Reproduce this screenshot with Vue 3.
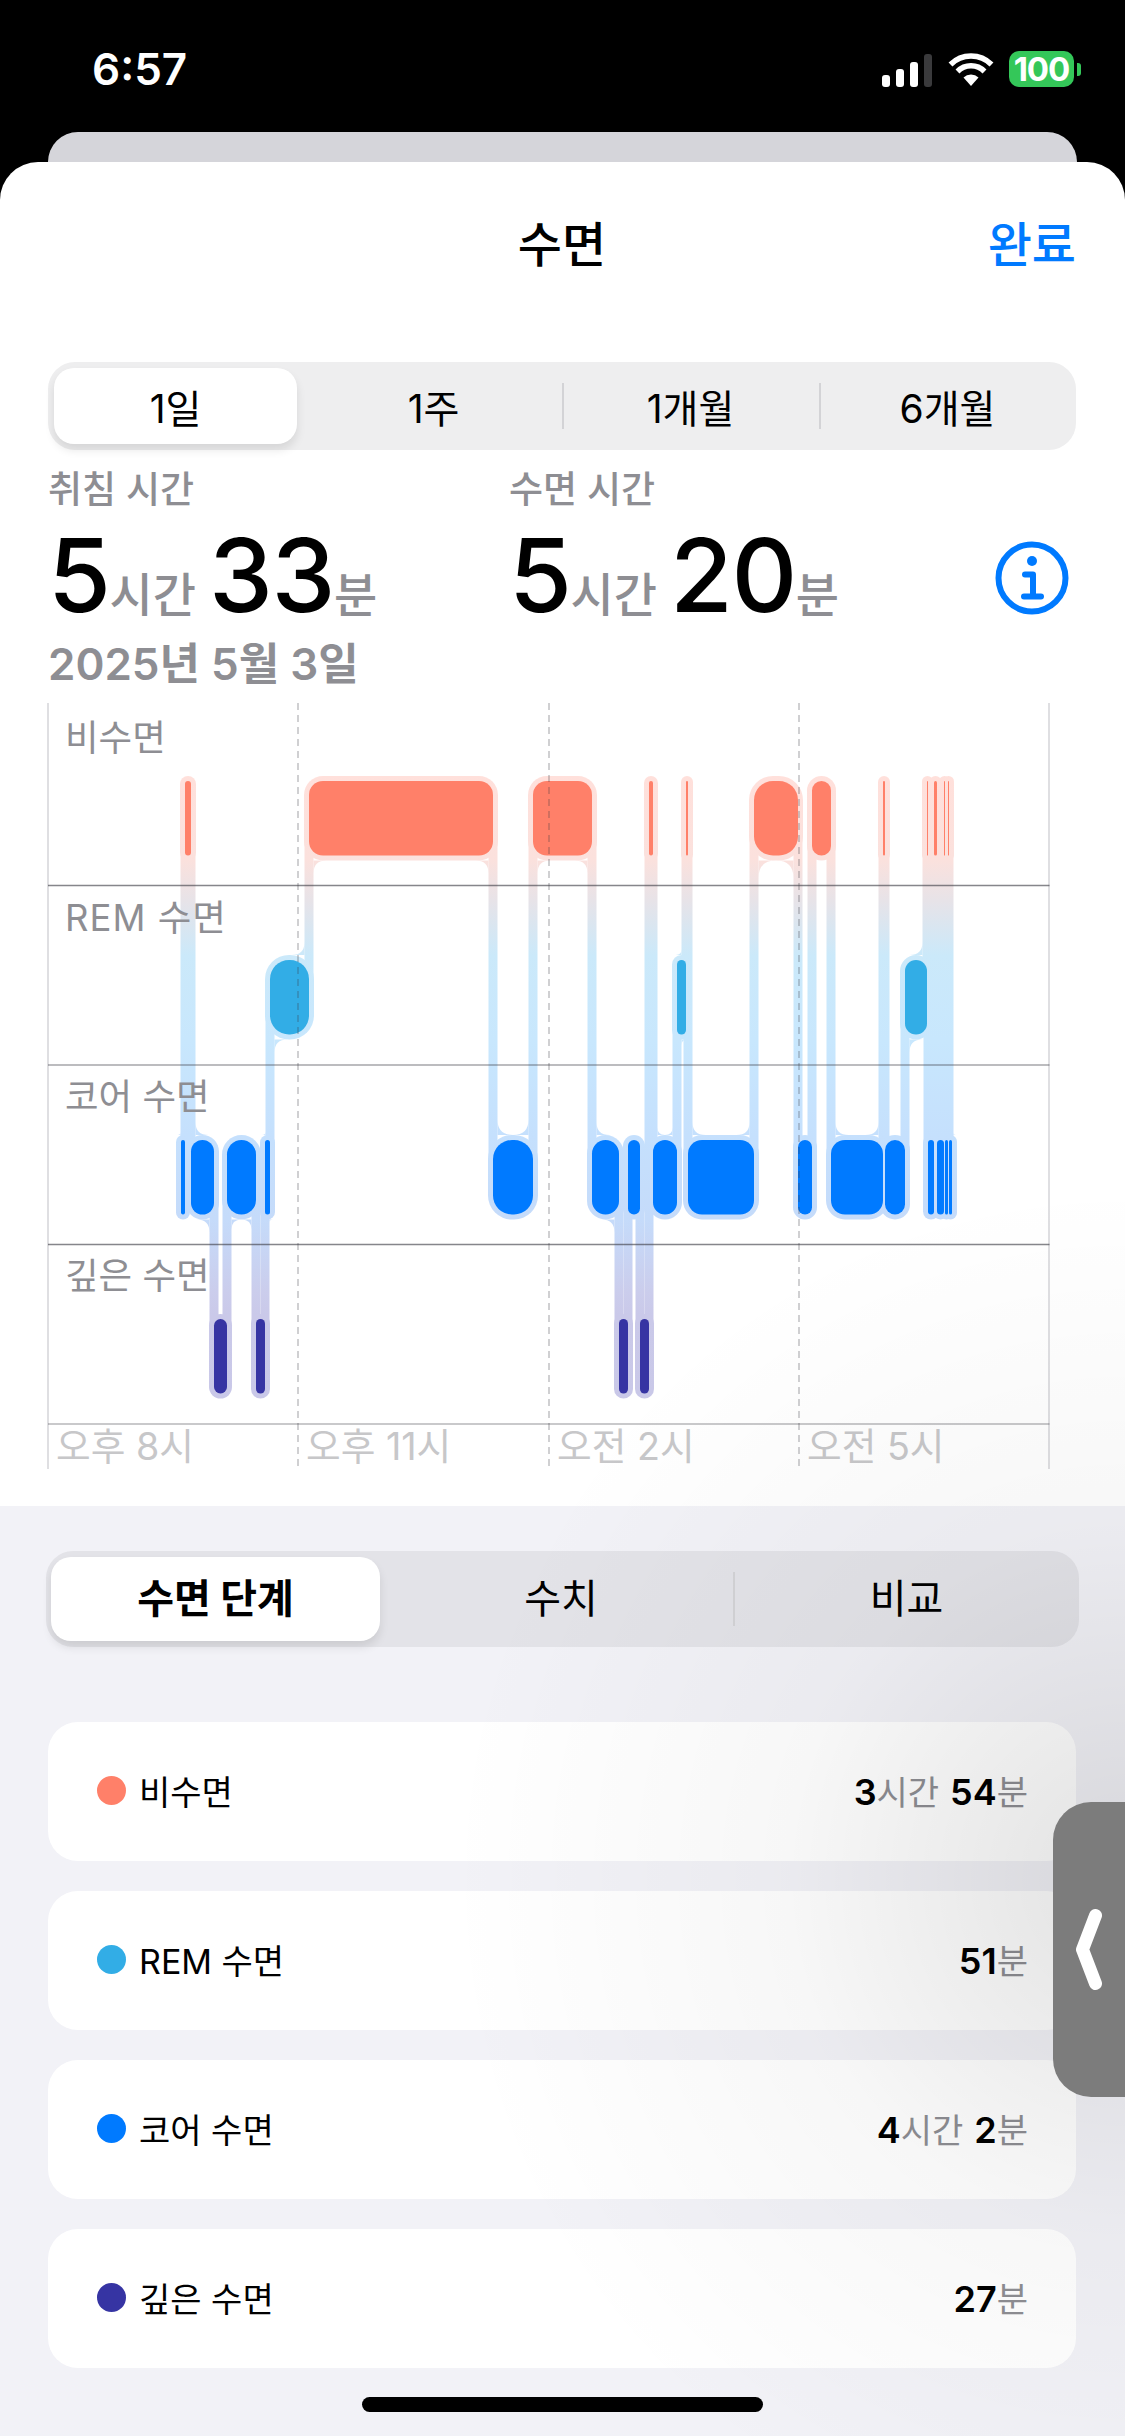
<script setup>
const LV = { a: 781, r: 960, c: 1140, d: 1319 }
const COL = { a: '#ff8069', r: '#32ade6', c: '#007aff', d: '#3634a3' }
const BAR_H = 74.5
const raw = [
  ['c',181,185],['a',185,191],['c',191,214],['d',214,227],['c',227,256],['d',256,265],['c',265,270],
  ['r',270,309],['a',309,493],['c',493,533],['a',533,592],['c',592,619],['d',619,628],['c',628,640],
  ['d',640,649],['a',649,653],['c',653,677],['r',677,686],['a',686,688],['c',688,754],['a',754,798],
  ['c',798,812],['a',812,831],['c',831,883],['a',883,885],['c',885,905],['r',905,927],['a',927,928],
  ['c',928,934],['a',934,937],['c',937,944],['a',944,945],['c',945,948],['a',948,949],['c',949,952],
]
const segs = raw.map(([l, x0, x1]) => {
  const w = x1 - x0
  const r = w <= 46 ? Math.min(w / 2, 19) : 14
  return { l, x0, x1, w, r, y: LV[l], color: COL[l] }
})
const conns = []
const fillets = []
segs.forEach((s, i) => {
  const next = segs[i + 1]
  const prev = segs[i - 1]
  if (next) {
    const y0 = Math.min(s.y, next.y) + 37
    const y1 = Math.max(s.y, next.y) + 37
    conns.push({ x: s.x1 - 4.5, y: y0, h: y1 - y0 })
  }
  const dirOf = (n) => (n ? (n.y < s.y ? -1 : 1) : 0)
  const dp = dirOf(prev)
  const dn = dirOf(next)
  const add = (sign, x, dir, other) => {
    const xE = x + sign * 4.5
    const yE = dir < 0 ? s.y - 5 : s.y + BAR_H + 5
    let r
    if (other === dir) {
      const gap = s.w - 9
      r = gap < 12 ? 0 : gap <= 40 ? gap / 2 : 13
    } else {
      const avail = s.w + 0.5
      r = avail > 20 ? 13 : avail * 0.6
    }
    if (r > 0) {
      fillets.push(`M${xE} ${yE}L${xE + sign * r} ${yE}Q${xE} ${yE} ${xE} ${yE + dir * r}Z`)
    }
  }
  if (prev) add(1, s.x0, dp, dn)
  if (next) add(-1, s.x1, dn, dp)
})
const filletPath = fillets.join('')

const dashes = [298, 549, 799]
const solids = [48, 1049]
const hLines = [
  { y: 885.5, c: 'rgba(60,60,67,.62)', w: 1.5 },
  { y: 1065, c: 'rgba(60,60,67,.34)', w: 2 },
  { y: 1244.5, c: 'rgba(60,60,67,.62)', w: 1.5 },
  { y: 1424, c: 'rgba(60,60,67,.28)', w: 2 },
]
const rowLabels = [
  { t: '비수면', y: 751 },
  { t: 'REM 수면', y: 931, wide: true },
  { t: '코어 수면', y: 1110 },
  { t: '깊은 수면', y: 1289 },
]
const timeLabels = [
  { t: '오후 8시', x: 56 },
  { t: '오후 11시', x: 306 },
  { t: '오전 2시', x: 557 },
  { t: '오전 5시', x: 807 },
]
const rangeTabs = ['1일', '1주', '1개월', '6개월']
const viewTabs = ['수면 단계', '수치', '비교']
const rows = [
  { name: '비수면', color: '#ff8069', parts: [['3', '시간'], ['54', '분']] },
  { name: 'REM 수면', color: '#32ade6', parts: [['51', '분']] },
  { name: '코어 수면', color: '#007aff', parts: [['4', '시간'], ['2', '분']] },
  { name: '깊은 수면', color: '#3634a3', parts: [['27', '분']] },
]
</script>

<template>
  <div class="phone">
    <header class="status">
      <span class="clock">6:57</span>
      <div class="status-icons">
        <svg class="signal" width="50" height="33" viewBox="0 0 50 33">
          <rect x="0" y="21" width="8" height="12" rx="3" fill="#fff" />
          <rect x="14" y="15" width="8" height="18" rx="3" fill="#fff" />
          <rect x="28" y="8" width="8" height="25" rx="3" fill="#fff" />
          <rect x="42" y="0" width="8" height="33" rx="3" fill="#3a3a3c" />
        </svg>
        <svg class="wifi" width="46" height="34" viewBox="0 0 46 34">
          <path d="M2.5 12.5A29 29 0 0 1 43.5 12.5" fill="none" stroke="#fff" stroke-width="5.5" />
          <path d="M9.5 19.5A19 19 0 0 1 36.5 19.5" fill="none" stroke="#fff" stroke-width="5.5" />
          <path d="M23 34L15.5 25.5A11 11 0 0 1 30.5 25.5Z" fill="#fff" />
        </svg>
        <div class="battery"><span class="battery-level">100</span></div>
        <i class="battery-nub"></i>
      </div>
    </header>

    <div class="back-sheet"></div>

    <main class="sheet">
      <nav class="nav">
        <span></span>
        <h1 class="title">수면</h1>
        <span class="done">완료</span>
      </nav>

      <div class="seg seg-range">
        <div v-for="(t, i) in rangeTabs" :key="t" class="seg-item" :class="{ on: i === 0, div: i >= 2 }">
          <span>{{ t }}</span>
        </div>
      </div>

      <section class="stats">
        <div class="stat stat-1">
          <div class="stat-label">취침 시간</div>
          <div class="stat-value"><b>5</b><em>시간</em><b class="gap">33</b><em>분</em></div>
        </div>
        <div class="stat stat-2">
          <div class="stat-label">수면 시간</div>
          <div class="stat-value"><b>5</b><em>시간</em><b class="gap">20</b><em>분</em></div>
        </div>
        <svg class="info" width="74" height="74" viewBox="0 0 74 74">
          <circle cx="37" cy="37" r="33.5" fill="none" stroke="#007aff" stroke-width="6" />
          <circle cx="37" cy="20" r="5" fill="#007aff" />
          <path d="M30 33.5H38V55M29 55.5H46" fill="none" stroke="#007aff" stroke-width="6" stroke-linecap="round" stroke-linejoin="round" />
        </svg>
      </section>
      <div class="date">2025년 5월 3일</div>

      <svg class="chart" width="1125" height="766" viewBox="0 703 1125 766">
        <defs>
          <linearGradient id="halo" gradientUnits="userSpaceOnUse" x1="0" x2="0" y1="776" y2="1399">
            <stop offset="0" stop-color="#ffe0db" />
            <stop offset="0.135" stop-color="#fbe1dd" />
            <stop offset="0.2" stop-color="#e7e3e8" />
            <stop offset="0.288" stop-color="#cbe9fa" />
            <stop offset="0.425" stop-color="#c8e7fd" />
            <stop offset="0.578" stop-color="#c5e0fd" />
            <stop offset="0.712" stop-color="#c5dbfa" />
            <stop offset="0.827" stop-color="#cbcdec" />
            <stop offset="0.865" stop-color="#cac9e9" />
            <stop offset="1" stop-color="#c9c8e8" />
          </linearGradient>
        </defs>

        <line v-for="x in solids" :key="x" :x1="x" :x2="x" y1="703" y2="1469" stroke="#d4d4d8" stroke-width="1.5" />

        <g fill="url(#halo)">
          <rect v-for="(c, i) in conns" :key="'c' + i" :x="c.x" :y="c.y" width="9" :height="c.h" />
          <rect v-for="(s, i) in segs" :key="'h' + i" :x="s.x0 - 5" :y="s.y - 5" :width="s.w + 10" :height="BAR_H + 10" :rx="s.r + 5" />
          <path :d="filletPath" />
        </g>
        <rect v-for="(s, i) in segs" :key="'b' + i" :x="s.x0" :y="s.y" :width="s.w" :height="BAR_H" :rx="s.r" :fill="s.color" />

        <line v-for="x in dashes" :key="x" :x1="x" :x2="x" y1="703" y2="1469" stroke="rgba(60,60,67,.24)" stroke-width="2" stroke-dasharray="7 5" />
        <line v-for="l in hLines" :key="l.y" x1="48" x2="1049.5" :y1="l.y" :y2="l.y" :stroke="l.c" :stroke-width="l.w" />

        <text v-for="l in rowLabels" :key="l.t" class="row-label" :class="{ wide: l.wide }" x="65" :y="l.y">{{ l.t }}</text>
        <text v-for="l in timeLabels" :key="l.t" class="time-label" :x="l.x" y="1460">{{ l.t }}</text>
      </svg>
    </main>

    <section class="lower">
      <div class="seg seg-view">
        <div v-for="(t, i) in viewTabs" :key="t" class="seg-item" :class="{ on: i === 0, div: i === 2 }">
          <span>{{ t }}</span>
        </div>
      </div>
      <ul class="cards">
        <li v-for="r in rows" :key="r.name" class="card">
          <i class="dot" :style="{ background: r.color }"></i>
          <span class="card-name">{{ r.name }}</span>
          <span class="card-value">
            <span v-for="(p, i) in r.parts" :key="i" class="part"><b>{{ p[0] }}</b><em>{{ p[1] }}</em></span>
          </span>
        </li>
      </ul>
      <div class="home"></div>
    </section>

    <div class="vignette"></div>

    <div class="touch">
      <svg width="26" height="81" viewBox="0 0 26 81">
        <path d="M19.5 6.5L6.5 40.5L19.5 74.5" fill="none" stroke="#fff" stroke-width="13" stroke-linecap="round" stroke-linejoin="round" />
      </svg>
    </div>
  </div>
</template>

<style>
html, body { margin: 0; background: #000; }
</style>

<style scoped>
.phone {
  position: relative;
  width: 1125px;
  height: 2436px;
  overflow: hidden;
  background: #000;
  font-family: Inter, "Noto Sans CJK KR", sans-serif;
  color: #000;
}
.status {
  height: 132px;
  display: flex;
  justify-content: space-between;
  align-items: flex-start;
  padding: 0 44px 0 92px;
  box-sizing: border-box;
  color: #fff;
}
.clock {
  margin-top: 41px;
  font-size: 44px;
  line-height: 56px;
  font-weight: 600;
}
.status-icons {
  display: flex;
  align-items: center;
  margin-top: 51px;
}
.signal { margin-top: 3px; }
.wifi { margin-left: 16px; }
.battery {
  margin-left: 15px;
  width: 65px;
  height: 36px;
  border-radius: 10px;
  background: #34c759;
  display: flex;
  align-items: center;
  justify-content: center;
}
.battery-level {
  font-size: 33px;
  letter-spacing: -1px;
  line-height: 36px;
  font-weight: 700;
  color: #fff;
}
.battery-nub {
  display: block;
  width: 4px;
  height: 13px;
  margin-left: 3px;
  border-radius: 0 3px 3px 0;
  background: #34c759;
}
.back-sheet {
  height: 30px;
  margin: 0 48px;
  background: #d5d5da;
  border-radius: 30px 30px 0 0;
}
.sheet {
  height: 1344px;
  background: #fff;
  border-radius: 38px 38px 0 0;
}
.nav {
  height: 166px;
  display: grid;
  grid-template-columns: 1fr auto 1fr;
  align-items: center;
  padding: 0 49px 0 48px;
}
.title {
  margin: 0;
  font-size: 48px;
  line-height: 60px;
  font-weight: 500;
}
.done {
  justify-self: end;
  font-size: 48px;
  line-height: 60px;
  font-weight: 500;
  color: #007aff;
}
.seg {
  display: flex;
  box-sizing: border-box;
}
.seg-range {
  margin: 34px 49px 0 48px;
  height: 88px;
  padding: 6px 0 6px 6px;
  border-radius: 27px;
  background: #eeeeef;
}
.seg-item {
  position: relative;
  flex: 1;
  display: flex;
  align-items: center;
  justify-content: center;
  font-weight: 400;
}
.seg-range .seg-item { font-size: 39px; }
.seg-item.on {
  background: #fff;
  box-shadow: 0 6px 10px rgba(0, 0, 0, .1);
}
.seg-range .seg-item.on {
  flex: 0 0 243px;
  margin-right: 8px;
  border-radius: 20px;
}
.seg-item.div::before {
  content: "";
  position: absolute;
  left: 0;
  width: 2px;
  background: #d3d3d6;
}
.seg-range .seg-item.div::before { top: 15px; bottom: 15px; }
.stats {
  display: flex;
  padding: 16px 0 0 48px;
}
.stat-1 { width: 461px; }
.stat-2 { width: 486px; }
.stat-label {
  font-size: 37px;
  line-height: 48px;
  font-weight: 500;
  color: #8e8e93;
}
.stat-value {
  height: 119px;
  padding-top: 3px;
  box-sizing: border-box;
  line-height: 116px;
  white-space: nowrap;
}
.stat-value b {
  font-size: 102px;
  letter-spacing: -1.5px;
  font-weight: 500;
}
.stat-value b.gap { margin-left: 13px; }
.stat-value em {
  font-style: normal;
  font-size: 47px;
  font-weight: 500;
  color: #8e8e93;
}
.info { margin-top: 75px; }
.date {
  padding-left: 48px;
  height: 60px;
  font-size: 44px;
  line-height: 62px;
  font-weight: 600;
  color: #8e8e93;
}
.chart {
  display: block;
  margin-top: 10px;
}
.row-label {
  font-size: 36.5px;
  fill: #8e8e93;
}
.row-label.wide { letter-spacing: 1px; }
.time-label {
  font-size: 37.7px;
  fill: #c7c7c9;
}
.lower {
  height: 930px;
  background: #f2f2f7;
  overflow: hidden;
}
.seg-view {
  margin: 45px 46px 0;
  height: 96px;
  padding: 6px 5px;
  border-radius: 27px;
  background: #e3e3e8;
}
.seg-view .seg-item { font-size: 40px; padding-bottom: 6px; box-sizing: border-box; }
.seg-view .seg-item.on {
  flex: 0 0 329px;
  margin-right: 9px;
  border-radius: 20px;
  font-weight: 700;
}
.seg-view .seg-item:nth-child(2) { flex: 0 0 344px; }
.seg-view .seg-item:last-child { padding-left: 6px; }
.seg-view .seg-item.div::before { top: 15px; bottom: 15px; }
.cards {
  list-style: none;
  margin: 75px 49px 0 48px;
  padding: 0;
  display: flex;
  flex-direction: column;
  gap: 30px;
}
.card {
  height: 139px;
  box-sizing: border-box;
  padding: 0 48px 3px 49px;
  display: flex;
  align-items: center;
  background: #fff;
  border-radius: 30px;
}
.dot {
  display: block;
  width: 29px;
  height: 29px;
  margin-top: 1px;
  border-radius: 50%;
  flex: none;
}
.card-name {
  margin-left: 13px;
  font-size: 34px;
}
.card-value {
  margin-left: auto;
  font-size: 36px;
  white-space: nowrap;
}
.part + .part { margin-left: 11px; }
.card-value b { font-weight: 600; }
.card-value em {
  font-style: normal;
  font-size: 34px;
  color: #8e8e93;
}
.home {
  width: 401px;
  height: 15px;
  margin: 29px auto 0;
  background: #000;
  border-radius: 8px;
}
.vignette {
  position: absolute;
  left: 0;
  top: 1100px;
  width: 1125px;
  height: 1336px;
  pointer-events: none;
  background: radial-gradient(ellipse 680px 700px at 1125px 780px, rgba(0, 0, 0, .115), rgba(0, 0, 0, .03) 50%, rgba(0, 0, 0, 0) 100%);
}
.touch {
  position: absolute;
  left: 1053px;
  top: 1802px;
  width: 72px;
  height: 295px;
  box-sizing: border-box;
  padding-left: 23px;
  display: flex;
  align-items: center;
  background: #7c7c7c;
  border-radius: 38px 0 0 38px;
}
</style>
